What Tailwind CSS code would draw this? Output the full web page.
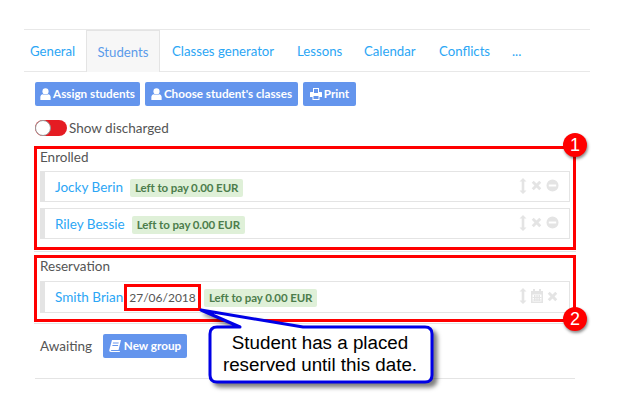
<!DOCTYPE html>
<html lang="en">
<head>
    <meta charset="UTF-8">
    <title>Students</title>
    <script src="https://cdn.jsdelivr.net/npm/@tailwindcss/browser@4"></script>
</head>
<body class="bg-white">
    <svg class="hidden">
        <symbol id="user" viewBox="0 0 12 14"><circle cx="6" cy="4" r="3.6" fill="currentColor"/><path d="M0 14V10.500C0 8.500 1.500 7.200 3 7.200 4 8 5 8.300 6 8.300S8 8 9 7.200C10.500 7.200 12 8.500 12 10.500V14Z" fill="currentColor"/></symbol>
        <symbol id="arrows" viewBox="0 0 8 16"><path d="M4 0 7.500 3.500H5.300V12.500H7.500L4 16 .5 12.500H2.700V3.500H.5Z" fill="currentColor"/></symbol>
        <symbol id="times" viewBox="0 0 12 12"><path d="M3 .8 6 3.800 9 .8 11.200 3 8.200 6 11.200 9 9 11.200 6 8.200 3 11.200 .8 9 3.800 6 .8 3Z" fill="currentColor"/></symbol>
        <symbol id="minus" viewBox="0 0 14 14"><path fill-rule="evenodd" d="M7 .5a6.500 6.500 0 1 0 0 13 6.500 6.500 0 0 0 0-13ZM3 5.800H11V8.200H3Z" fill="currentColor"/></symbol>
    </svg>

    <div class="relative w-[625px] h-[409px] overflow-hidden font-['Lato',sans-serif] text-[13.5px] text-[#555]">
        <div class="pt-[29px] pl-6 pr-[35px]">
            <!-- Tabs -->
            <div class="flex h-[43px] border-y border-[#e8e8e8] text-[13.2px] text-[#2ba6f5]">
                <a class="w-[62px] pl-[6px] leading-[42px]">General</a>
                <a class="w-[74px] h-[42px] border-x border-t border-[#e4e4e4] bg-[#f7f7f7] text-center leading-[42px] text-[#5b9bea]">Students</a>
                <a class="ml-[12px] w-[115px] leading-[42px]">Classes generator</a>
                <a class="ml-[10px] w-[67px] leading-[42px]">Lessons</a>
                <a class="w-[75px] leading-[42px]">Calendar</a>
                <a class="w-[73px] leading-[42px]">Conflicts</a>
                <a class="leading-[42px]">...</a>
            </div>

            <div class="pl-[11px]">
                <!-- Buttons -->
                <div class="flex gap-[5px] mt-[10px] text-[11.7px] font-bold text-white">
                    <button class="flex items-center gap-[2px] w-[105px] h-6 justify-center rounded-[2px] bg-[#6495ed]"><svg class="w-[11px] h-[12px]"><use href="#user"/></svg>Assign students</button>
                    <button class="flex items-center gap-[2px] w-[153px] h-6 justify-center rounded-[2px] bg-[#6495ed]"><svg class="w-[11px] h-[12px]"><use href="#user"/></svg>Choose student's classes</button>
                    <button class="flex items-center gap-[2px] w-[53px] h-6 justify-center rounded-[2px] bg-[#6495ed]">
                        <svg class="w-[12px] h-[12px]" viewBox="0 0 12 12"><path fill-rule="evenodd" d="M3 0H9V4H11.500C11.800 4 12 4.200 12 4.500V9H9.500V12H2.500V9H0V4.500C0 4.200.2 4 .5 4H3ZM4 1V5H8V1ZM3.500 8V11H8.500V8Z" fill="currentColor"/></svg>Print
                    </button>
                </div>

                <!-- Toggle -->
                <div class="flex items-center gap-[2px] mt-[14px] h-4">
                    <div class="flex justify-start w-8 h-4 rounded-full bg-[#e51c23]"><span class="w-4 h-4 rounded-full bg-white border border-[#999]"></span></div>
                    <span>Show discharged</span>
                </div>

                <!-- Enrolled -->
                <section class="mt-[10px] -ml-[1px] w-[542px] h-[104px] border-[3px] border-[#f00] px-[3px]">
                    <div class="h-[20px] leading-[16px]">Enrolled</div>
                    <div class="flex flex-col gap-[6px] mt-[2px]">
                        <div class="flex items-center h-[31px] border border-l-[5px] border-[#e4e4e4] pt-[2px] pl-[10px] pr-[10px]">
                            <a class="text-[#2ba6f5]">Jocky Berin</a>
                            <span class="ml-[7px] px-[5px] h-[18px] leading-[17px] rounded-[2px] bg-[#dff0d8] text-[11.5px] font-bold tracking-[-0.1px] text-[#4c7d4c]">Left to pay 0.00 EUR</span>
                            <div class="flex items-center gap-[4px] ml-auto mb-[4px] text-[#e4e4e4]">
                                <svg class="w-[8px] h-[16px]"><use href="#arrows"/></svg>
                                <svg class="w-[11px] h-[11px]"><use href="#times"/></svg>
                                <svg class="w-[13px] h-[13px]"><use href="#minus"/></svg>
                            </div>
                        </div>
                        <div class="flex items-center h-[31px] border border-l-[5px] border-[#e4e4e4] pt-[2px] pl-[10px] pr-[10px]">
                            <a class="text-[#2ba6f5]">Riley Bessie</a>
                            <span class="ml-[7px] px-[5px] h-[18px] leading-[17px] rounded-[2px] bg-[#dff0d8] text-[11.5px] font-bold tracking-[-0.1px] text-[#4c7d4c]">Left to pay 0.00 EUR</span>
                            <div class="flex items-center gap-[4px] ml-auto mb-[4px] text-[#e4e4e4]">
                                <svg class="w-[8px] h-[16px]"><use href="#arrows"/></svg>
                                <svg class="w-[11px] h-[11px]"><use href="#times"/></svg>
                                <svg class="w-[13px] h-[13px]"><use href="#minus"/></svg>
                            </div>
                        </div>
                    </div>
                </section>
                <div class="mt-[1px] -ml-[1px] w-[542px] border-t border-[#e4e4e4]"></div>

                <!-- Reservation -->
                <section class="mt-[3px] -ml-[1px] w-[542px] h-[67px] border-[3px] border-[#f00] px-[3px]">
                    <div class="h-[20px] leading-[17px]">Reservation</div>
                    <div class="flex items-center h-[32px] mt-[3px] border border-l-[5px] border-[#e4e4e4] pt-[1px] pl-[10px] pr-[11px]">
                        <a class="w-[69px] whitespace-nowrap text-[#2ba6f5]">Smith Brian</a>
                        <span class="w-[77px] h-[27px] shrink-0 border-[3px] border-[#f00] text-center text-[12px] leading-[21px]">27/06/2018</span>
                        <span class="ml-[3px] px-[5px] h-[18px] leading-[17px] rounded-[2px] bg-[#dff0d8] text-[11.5px] font-bold tracking-[-0.1px] text-[#4c7d4c]">Left to pay 0.00 EUR</span>
                        <div class="flex items-center gap-[3px] ml-auto mb-[3px] text-[#e4e4e4]">
                            <svg class="w-[8px] h-[16px]"><use href="#arrows"/></svg>
                            <svg class="w-[14px] h-[14px]" viewBox="0 0 14 14"><path fill-rule="evenodd" d="M1 2H3V0H5V2H9V0H11V2H13V14H1ZM2.500 5.500V12.500H11.500V5.500Z" fill="currentColor"/><path d="M4 6H5.500V12H4ZM6.300 6H7.700V12H6.300ZM8.500 6H10V12H8.500ZM2.500 8H11.500V9H2.500ZM2.500 10.500H11.500V11.500H2.500Z" fill="currentColor"/></svg>
                            <svg class="w-[11px] h-[11px]"><use href="#times"/></svg>
                        </div>
                    </div>
                </section>
                <div class="mt-[1px] -ml-[1px] w-[542px] border-t border-[#e4e4e4]"></div>

                <!-- Awaiting -->
                <div class="flex items-center h-[24px] mt-[10px] pl-[5px]">
                    <span class="w-[50px]">Awaiting</span>
                    <button class="flex items-center justify-center gap-[3px] ml-[13px] w-[84px] h-6 rounded-[2px] bg-[#6495ed] text-[11.7px] font-bold text-white">
                        <svg class="w-[12px] h-[12px]" viewBox="0 0 12 12"><path fill-rule="evenodd" d="M3 0H12L9.500 10H2.500C2 10 1.700 10.300 1.800 10.600 1.900 10.900 2.200 11 2.500 11H11L10.700 12H2C.8 12 0 11.200 .3 10Z M4 2.500 3.800 3.500H9.500L9.700 2.500ZM3.500 5 3.300 6H9L9.200 5Z" fill="currentColor"/></svg>New group
                    </button>
                </div>
                <div class="mt-[20px] w-[540px] border-t border-[#e4e4e4]"></div>
            </div>
        </div>

        <!-- Annotations over the page -->
        <div class="absolute left-[563px] top-[133px] flex items-center justify-center w-6 h-6 rounded-full bg-[#f00] text-white text-[18px] font-['Liberation_Sans',sans-serif] shadow-[1px_2px_3px_rgba(0,0,0,0.45)]">1</div>
        <div class="absolute left-[563px] top-[307px] flex items-center justify-center w-6 h-6 rounded-full bg-[#f00] text-white text-[18px] font-['Liberation_Sans',sans-serif] shadow-[1px_2px_3px_rgba(0,0,0,0.45)]">2</div>

        <svg class="absolute left-0 top-0 w-[625px] h-[409px] drop-shadow-[4px_4px_2px_rgba(0,0,0,0.5)]" viewBox="0 0 625 409">
            <path d="M201 310 303 327H425Q432 327 432 334V375Q432 382 425 382H217Q210 382 210 375V334Q210 327 217 327H240Z" fill="#fff" stroke="#0000e6" stroke-width="3" stroke-linejoin="round"/>
        </svg>
        <div class="absolute left-[209px] top-[332px] w-[222px] text-center font-['Liberation_Sans',sans-serif] text-[18.8px] leading-[22px] text-black">Student has a placed<br>reserved until this date.</div>
    </div>
</body>
</html>
